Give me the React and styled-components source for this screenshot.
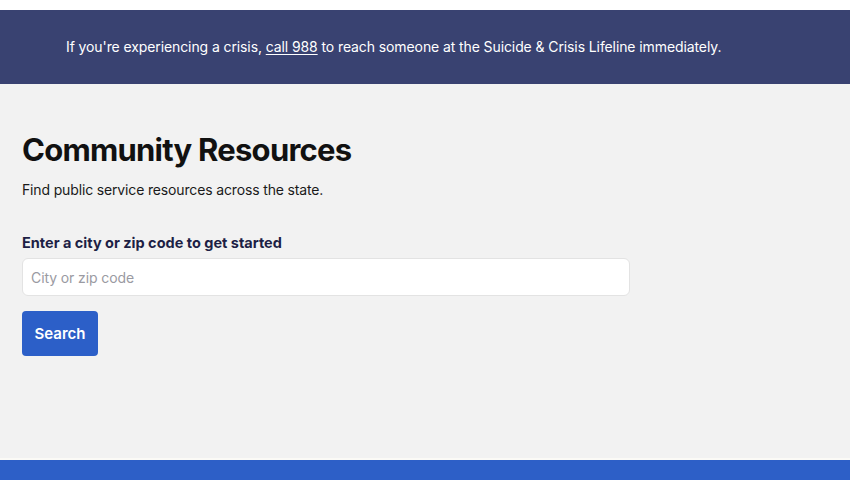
import React from "react";
import styled, { createGlobalStyle } from "styled-components";

const Global = createGlobalStyle`
  html, body { margin: 0; padding: 0; background: #ffffff; }
  body { font-family: Inter, "Noto Sans", "Liberation Sans", sans-serif; }
  * { box-sizing: border-box; }
`;

const Page = styled.div`
  display: flex;
  flex-direction: column;
  height: 480px;
  padding-top: 10px;
  background: #ffffff;
`;

const Banner = styled.div`
  height: 74px;
  background: #394271;
  color: #ffffff;
  display: flex;
  align-items: center;
  padding: 0 0 2px 66px;
  font-size: 14px;
  letter-spacing: -0.1px;
`;

const BannerLink = styled.a`
  color: #ffffff;
  text-decoration: underline;
  text-underline-offset: 2px;
`;

const Main = styled.main`
  flex: 1;
  background: #f2f2f2;
  padding: 46px 22px 0;
  border-bottom: 2px solid #fbfaf6;
`;

const Title = styled.h1`
  margin: 0;
  font-size: 31px;
  font-weight: 700;
  letter-spacing: -0.75px;
  color: #111111;
  line-height: 40px;
`;

const Subtitle = styled.p`
  margin: 10px 0 0;
  font-size: 14px;
  letter-spacing: -0.15px;
  color: #1a1a1a;
  line-height: 20px;
`;

const Form = styled.form`
  margin-top: 33px;
  display: flex;
  flex-direction: column;
  align-items: flex-start;
`;

const Label = styled.label`
  font-size: 14.5px;
  font-weight: 700;
  color: #1d1f45;
  line-height: 20px;
`;

const Input = styled.input`
  margin-top: 5px;
  width: 608px;
  height: 38px;
  border: 1px solid #e3e3e3;
  border-radius: 6px;
  background: #ffffff;
  padding: 0 8px;
  font-family: inherit;
  font-size: 14px;
  letter-spacing: -0.1px;
  color: #222;
  outline: none;
  &::placeholder { color: #9a9aa2; }
`;

const Button = styled.button`
  margin-top: 15px;
  width: 76px;
  height: 45px;
  border: none;
  border-radius: 4px;
  background: #2c5fc8;
  color: #ffffff;
  font-family: inherit;
  font-size: 15px;
  font-weight: 600;
  cursor: pointer;
`;

const Footer = styled.footer`
  height: 20px;
  background: #2d5fc7;
`;

export default function App() {
  return (
    <>
      <Global />
      <Page>
        <Banner>
          <span>
            If you're experiencing a crisis, <BannerLink href="#">call 988</BannerLink> to reach someone at the Suicide &amp; Crisis Lifeline immediately.
          </span>
        </Banner>
        <Main>
          <Title>Community Resources</Title>
          <Subtitle>Find public service resources across the state.</Subtitle>
          <Form onSubmit={(e) => e.preventDefault()}>
            <Label htmlFor="loc">Enter a city or zip code to get started</Label>
            <Input id="loc" placeholder="City or zip code" />
            <Button type="submit">Search</Button>
          </Form>
        </Main>
        <Footer />
      </Page>
    </>
  );
}
